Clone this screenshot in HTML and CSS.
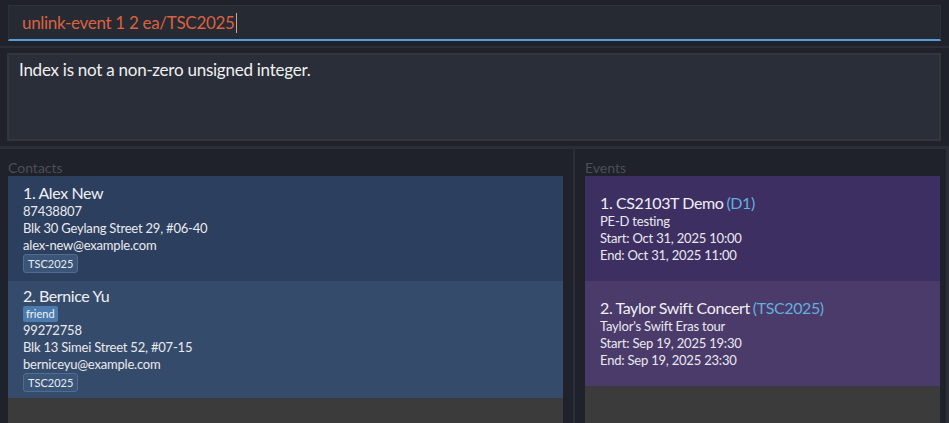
FILE: index.html
```html
<!DOCTYPE html>
<html>
<head>
<meta charset="utf-8">
<link rel="stylesheet" href="styles.css">
</head>
<body>
<div class="app">
  <div class="cmd-wrap">
    <div class="cmd-box"><span class="cmd-text">unlink-event 1 2 ea/TSC2025</span><span class="caret"></span></div>
  </div>
  <div class="band band-top"></div>
  <div class="result-wrap">
    <div class="result-box">Index is not a non-zero unsigned integer.</div>
  </div>
  <div class="band band-low"></div>
  <div class="panes">
    <div class="pane pane-left">
      <div class="pane-label">Contacts</div>
      <div class="list">
        <div class="card contact c1">
          <div class="name">1. Alex New</div>
          <div class="line">87438807</div>
          <div class="line">Blk 30 Geylang Street 29, #06-40</div>
          <div class="line">alex-new@example.com</div>
          <div class="tags"><span class="tag">TSC2025</span></div>
        </div>
        <div class="card contact c2">
          <div class="name">2. Bernice Yu</div>
          <div class="labels"><span class="label">friend</span></div>
          <div class="line">99272758</div>
          <div class="line">Blk 13 Simei Street 52, #07-15</div>
          <div class="line">berniceyu@example.com</div>
          <div class="tags"><span class="tag">TSC2025</span></div>
        </div>
      </div>
    </div>
    <div class="divider"></div>
    <div class="pane pane-right">
      <div class="pane-label">Events</div>
      <div class="list">
        <div class="card event e1">
          <div class="name">1. CS2103T Demo<span class="code">(D1)</span></div>
          <div class="line">PE-D testing</div>
          <div class="line">Start: Oct 31, 2025 10:00</div>
          <div class="line">End: Oct 31, 2025 11:00</div>
        </div>
        <div class="card event e2">
          <div class="name">2. Taylor Swift Concert<span class="code">(TSC2025)</span></div>
          <div class="line">Taylor's Swift Eras tour</div>
          <div class="line">Start: Sep 19, 2025 19:30</div>
          <div class="line">End: Sep 19, 2025 23:30</div>
        </div>
      </div>
    </div>
    <div class="edge"></div>
  </div>
</div>
</body>
</html>
```
FILE: styles.css
```css
* { box-sizing: border-box; }
html, body { margin: 0; padding: 0; }
body {
  background: #1f222a;
  font-family: Lato, "Noto Sans", sans-serif;
  color: #ffffff;
  width: 949px;
  height: 423px;
  overflow: hidden;
}
.app { display: flex; flex-direction: column; height: 423px; }

.cmd-wrap { padding: 5px 8px 0 8px; }
.cmd-box {
  height: 36px;
  background: #262a33;
  border: 1px solid #2d313a;
  border-bottom: 2px solid #5b9bd5;
  display: flex;
  align-items: center;
  padding-left: 13px;
}
.cmd-text { font-size: 17px; color: #db6140; letter-spacing: -0.3px; }
.caret { width: 1px; height: 20px; background: #d9a08a; margin-left: 1px; }

.band { height: 3px; background: #2b2e36; margin-top: 5px; }
.band-top { height: 2px; }
.band-low { margin-top: 5px; }

.result-wrap { padding: 5px 8px 0 7px; }
.result-box {
  height: 88px;
  background: #2a2e39;
  border: 2px solid #33363d;
  padding: 4px 10px;
  font-size: 17px;
  line-height: 22px;
  color: #f0f0f0;
  letter-spacing: -0.25px;
}

.panes { flex: 1; display: flex; min-height: 0; }
.pane { display: flex; flex-direction: column; }
.pane-left { width: 573px; padding: 10px 10px 0 8px; }
.pane-right { width: 371px; padding: 10px 6px 0 10px; }
.divider { width: 2px; background: #2b2e36; }
.edge { width: 3px; background: #2b2e36; }

.pane-label {
  font-size: 14px;
  line-height: 17px;
  color: #4b4e56;
}
.list { flex: 1; background: #3b3b3b; }

.card { padding: 7px 15px 8px 15px; }
.contact.c1 { background: #2c3f5e; }
.contact.c2 { background: #354b6b; padding: 5px 15px 6px 15px; }
.event { padding: 17px 15px 17px 15px; }
.event.e1 { background: #3e2f63; }
.event.e2 { background: #4b3b6b; }

.name { font-size: 16px; line-height: 20px; color: #f0f0f3; letter-spacing: -0.4px; }
.line { font-size: 13px; line-height: 17px; color: #eaeaee; letter-spacing: -0.2px; }
.code { color: #62aede; margin-left: 3px; }

.tags { display: flex; height: 19px; }
.tag {
  font-size: 11px;
  line-height: 17px;
  padding: 0 4px;
  border: 1px solid #4f6d8f;
  background: #3a5577;
  border-radius: 3px;
  color: #e8ecf2;
}
.labels { display: flex; height: 16px; }
.label {
  font-size: 11px;
  line-height: 16px;
  padding: 0 3px;
  background: #4c7bb0;
  border-radius: 2px;
  color: #eef2f8;
}
```
